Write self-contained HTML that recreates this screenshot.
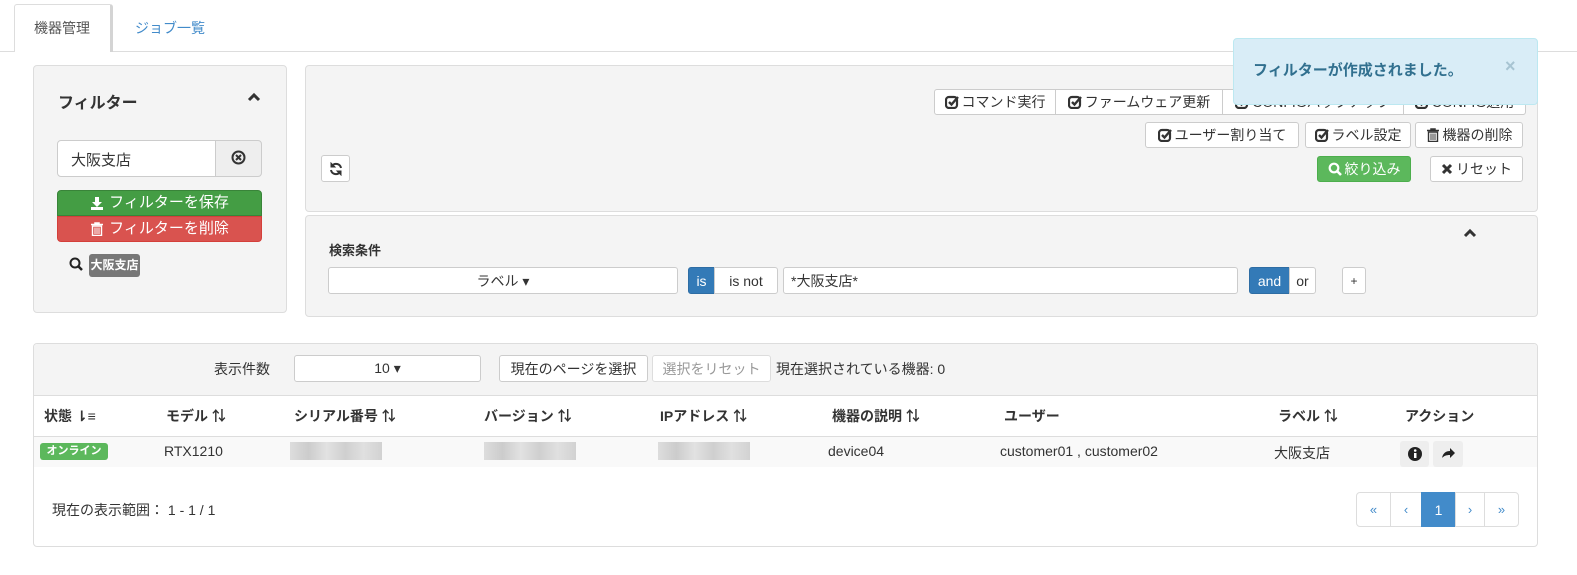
<!DOCTYPE html>
<html><head><meta charset="utf-8"><style>
*{box-sizing:border-box;margin:0;padding:0}
body{width:1577px;height:575px;background:#fff;font-family:"Liberation Sans","Noto Sans CJK JP",sans-serif;font-size:14px;color:#333;position:relative;overflow:hidden}
.a{position:absolute}
.panel{position:absolute;background:#f4f4f4;border:1px solid #ddd;border-radius:4px}
.btn{position:absolute;background:#fff;border:1px solid #ccc;border-radius:3px;font-size:14px;display:flex;align-items:center;justify-content:center;color:#333;white-space:nowrap}
.btn svg{margin-right:3px}
.th{position:absolute;top:406px;font-weight:bold;font-size:14px}
.td{position:absolute;top:443px;font-size:14px}
.blur{position:absolute;top:442px;height:18px;background:linear-gradient(90deg,#ddd,#ccc 20%,#e2e2e2 40%,#cfcfcf 60%,#e0e0e0 80%,#d2d2d2)}
.pg{position:absolute;top:492px;height:35px;border:1px solid #ddd;display:flex;align-items:center;justify-content:center;color:#428bca;font-size:13px;background:#fff}
</style></head><body>
<svg width="0" height="0" style="position:absolute"><defs>
<symbol id="chk" viewBox="0 0 14 14"><rect x="1" y="2" width="11" height="11" rx="3" fill="none" stroke="#333" stroke-width="2.2"/><path d="M4 7L6.5 9.5L13 2" fill="none" stroke="#333" stroke-width="2.4"/></symbol>
<symbol id="trash" viewBox="0 0 14 14"><path d="M1 2.5H13M5 2.5V1H9V2.5" stroke="currentColor" stroke-width="1.5" fill="none"/><path d="M2.5 4H11.5V13.5H2.5Z" fill="none" stroke="currentColor" stroke-width="1.4"/><path d="M5 5.5V12M7 5.5V12M9 5.5V12" stroke="currentColor" stroke-width="1"/></symbol>
</defs></svg>
<!-- tabs -->
<div class="a" style="left:0;top:51px;width:1577px;height:1px;background:#ddd"></div>
<div class="a" style="left:14px;top:4px;width:99px;height:48px;background:#fff;border:1px solid #ddd;border-bottom:none;border-right:3px solid #d4d4d4;border-radius:3px 3px 0 0"></div>
<div class="a" style="left:34px;top:18px;color:#555">機器管理</div>
<div class="a" style="left:135px;top:18px;color:#428bca">ジョブ一覧</div>

<!-- filter panel -->
<div class="panel" style="left:33px;top:65px;width:254px;height:248px"></div>
<div class="a" style="left:58px;top:89px;font-weight:bold;font-size:16px">フィルター</div>
<svg class="a" style="left:247px;top:92px" width="14" height="10"><path d="M2 8L7 3L12 8" stroke="#333" stroke-width="3" fill="none"/></svg>
<div class="a" style="left:57px;top:140px;width:159px;height:37px;background:#fff;border:1px solid #ccc;border-radius:4px 0 0 4px;padding:8px 13px;font-size:15px">大阪支店</div>
<div class="a" style="left:215px;top:140px;width:47px;height:37px;background:#eee;border:1px solid #ccc;border-radius:0 4px 4px 0"></div>
<svg class="a" style="left:231px;top:150px" width="15" height="15"><circle cx="7.5" cy="7.5" r="6" stroke="#333" stroke-width="2" fill="none"/><path d="M5 5L10 10M10 5L5 10" stroke="#333" stroke-width="2"/></svg>
<div class="a" style="left:57px;top:190px;width:205px;height:26px;background:#449d44;border:1px solid #398439;border-radius:4px 4px 0 0;color:#fff;line-height:24px;font-size:15px;display:flex;justify-content:center;align-items:center"><svg width="14" height="14" style="margin-right:5px"><path d="M5 1H9V6H12L7 11L2 6H5Z" fill="#fff"/><rect x="1" y="11" width="12" height="3" fill="#fff"/></svg>フィルターを保存</div>
<div class="a" style="left:57px;top:216px;width:205px;height:26px;background:#d9534f;border:1px solid #d43f3a;border-radius:0 0 4px 4px;color:#fff;line-height:24px;font-size:15px;display:flex;justify-content:center;align-items:center"><svg width="14" height="14" style="margin-right:5px;color:#fff"><use href="#trash"/></svg>フィルターを削除</div>
<svg class="a" style="left:69px;top:257px" width="15" height="15"><circle cx="6" cy="6" r="4.5" stroke="#222" stroke-width="2" fill="none"/><path d="M9 9L13 13" stroke="#222" stroke-width="2.5"/></svg>
<div class="a" style="left:89px;top:254px;width:51px;height:23px;background:#777;border-radius:3px;color:#fff;font-weight:bold;font-size:12px;line-height:23px;text-align:center">大阪支店</div>

<!-- top right panel -->
<div class="panel" style="left:305px;top:65px;width:1233px;height:147px"></div>
<div class="btn" style="left:934px;top:89px;width:122px;height:26px;border-radius:3px 0 0 3px"><svg width="14" height="14"><use href="#chk"/></svg>コマンド実行</div>
<div class="btn" style="left:1055px;top:89px;width:168px;height:26px;border-radius:0"><svg width="14" height="14"><use href="#chk"/></svg>ファームウェア更新</div>
<div class="btn" style="left:1222px;top:89px;width:182px;height:26px;border-radius:0"><svg width="14" height="14"><use href="#chk"/></svg>CONFIGバックアップ</div>
<div class="btn" style="left:1403px;top:89px;width:123px;height:26px;border-radius:0 3px 3px 0"><svg width="14" height="14"><use href="#chk"/></svg>CONFIG適用</div>
<div class="btn" style="left:1145px;top:122px;width:154px;height:26px"><svg width="14" height="14"><use href="#chk"/></svg>ユーザー割り当て</div>
<div class="btn" style="left:1305px;top:122px;width:106px;height:26px"><svg width="14" height="14"><use href="#chk"/></svg>ラベル設定</div>
<div class="btn" style="left:1415px;top:122px;width:108px;height:26px"><svg width="14" height="14" style="color:#333"><use href="#trash"/></svg>機器の削除</div>
<div class="btn" style="left:1317px;top:156px;width:94px;height:26px;background:#5cb85c;border-color:#4cae4c;color:#fff"><svg width="14" height="14"><circle cx="6" cy="6" r="4.3" stroke="#fff" stroke-width="2.2" fill="none"/><path d="M9 9L13 13" stroke="#fff" stroke-width="2.6"/></svg>絞り込み</div>
<div class="btn" style="left:1430px;top:156px;width:93px;height:26px"><svg width="12" height="12"><path d="M2 2L10 10M10 2L2 10" stroke="#333" stroke-width="3"/></svg>リセット</div>
<div class="btn" style="left:321px;top:155px;width:29px;height:27px"><svg width="14" height="14" style="margin:0"><path d="M12 6A5 5 0 0 0 3 4M2 8A5 5 0 0 0 11 10" fill="none" stroke="#333" stroke-width="2"/><path d="M2 1V5H6Z M12 13V9H8Z" fill="#333" stroke="#333" stroke-width="1"/></svg></div>

<!-- toast -->
<div class="a" style="left:1233px;top:38px;width:305px;height:67px;background:#d9edf7;border:1px solid #bce8f1;border-radius:4px"></div>
<div class="a" style="left:1253px;top:59px;color:#31708f;font-weight:bold;font-size:15px">フィルターが作成されました。</div>
<div class="a" style="left:1505px;top:56px;color:#a7c4d2;font-weight:bold;font-size:18px">×</div>

<!-- search panel -->
<div class="panel" style="left:305px;top:215px;width:1233px;height:102px"></div>
<svg class="a" style="left:1463px;top:228px" width="14" height="10"><path d="M2 8L7 3L12 8" stroke="#333" stroke-width="3" fill="none"/></svg>
<div class="a" style="left:329px;top:240px;font-weight:bold;font-size:13px">検索条件</div>
<div class="btn" style="left:328px;top:267px;width:350px;height:27px">ラベル ▾</div>
<div class="btn" style="left:688px;top:267px;width:27px;height:27px;background:#337ab7;border-color:#2e6da4;color:#fff;border-radius:3px 0 0 3px">is</div>
<div class="btn" style="left:714px;top:267px;width:64px;height:27px;border-radius:0 3px 3px 0">is not</div>
<div class="btn" style="left:783px;top:267px;width:455px;height:27px;justify-content:flex-start;padding-left:7px">*大阪支店*</div>
<div class="btn" style="left:1249px;top:267px;width:41px;height:27px;background:#337ab7;border-color:#2e6da4;color:#fff;border-radius:3px 0 0 3px">and</div>
<div class="btn" style="left:1289px;top:267px;width:27px;height:27px;border-radius:0 3px 3px 0">or</div>
<div class="btn" style="left:1342px;top:267px;width:24px;height:27px;font-size:12px">+</div>

<!-- table panel -->
<div class="a" style="left:33px;top:343px;width:1505px;height:204px;border:1px solid #ddd;border-radius:4px;background:#fff"></div>
<div class="a" style="left:34px;top:344px;width:1503px;height:52px;background:#f4f4f4;border-bottom:1px solid #ddd;border-radius:4px 4px 0 0"></div>
<div class="a" style="left:214px;top:359px;font-size:14px">表示件数</div>
<div class="btn" style="left:294px;top:355px;width:187px;height:27px">10 ▾</div>
<div class="btn" style="left:499px;top:355px;width:149px;height:27px">現在のページを選択</div>
<div class="btn" style="left:652px;top:355px;width:119px;height:27px;color:#999;border-color:#ddd">選択をリセット</div>
<div class="a" style="left:776px;top:359px">現在選択されている機器: 0</div>
<div class="a" style="left:34px;top:436px;width:1503px;height:1px;background:#ddd"></div>
<div class="th" style="left:44px">状態 ⇂≡</div>
<div class="th" style="left:166px">モデル ⇅</div>
<div class="th" style="left:294px">シリアル番号 ⇅</div>
<div class="th" style="left:484px">バージョン ⇅</div>
<div class="th" style="left:660px">IPアドレス ⇅</div>
<div class="th" style="left:832px">機器の説明 ⇅</div>
<div class="th" style="left:1004px">ユーザー</div>
<div class="th" style="left:1278px">ラベル ⇅</div>
<div class="th" style="left:1405px">アクション</div>
<div class="a" style="left:34px;top:437px;width:1503px;height:30px;background:#f9f9f9"></div>
<div class="a" style="left:40px;top:443px;width:68px;height:17px;background:#5cb85c;border-radius:3px;color:#fff;font-weight:bold;font-size:11px;text-align:center;line-height:17px">オンライン</div>
<div class="td" style="left:164px">RTX1210</div>
<div class="blur" style="left:290px;width:92px"></div>
<div class="blur" style="left:484px;width:92px"></div>
<div class="blur" style="left:658px;width:92px"></div>
<div class="td" style="left:828px">device04</div>
<div class="td" style="left:1000px">customer01 , customer02</div>
<div class="td" style="left:1274px">大阪支店</div>
<div class="a" style="left:1400px;top:441px;width:29px;height:26px;background:#eee;border-radius:3px"></div>
<svg class="a" style="left:1407px;top:446px" width="16" height="16"><circle cx="8" cy="8" r="7" fill="#222"/><rect x="7" y="7" width="2.5" height="5" fill="#fff"/><circle cx="8.2" cy="4.5" r="1.3" fill="#fff"/></svg>
<div class="a" style="left:1433px;top:441px;width:30px;height:26px;background:#eee;border-radius:3px"></div>
<svg class="a" style="left:1440px;top:446px" width="16" height="14"><path d="M2 12C3 7 6 5 10 5V2L15 7L10 12V9C6 9 4 10 2 12Z" fill="#222"/></svg>
<div class="a" style="left:52px;top:500px;font-size:14px">現在の表示範囲： 1 - 1 / 1</div>
<div class="pg" style="left:1356px;width:35px;border-radius:4px 0 0 4px">«</div>
<div class="pg" style="left:1390px;width:32px">‹</div>
<div class="pg" style="left:1421px;width:35px;background:#428bca;border-color:#428bca;color:#fff;font-size:14px">1</div>
<div class="pg" style="left:1455px;width:30px">›</div>
<div class="pg" style="left:1484px;width:35px;border-radius:0 4px 4px 0">»</div>
</body></html>
